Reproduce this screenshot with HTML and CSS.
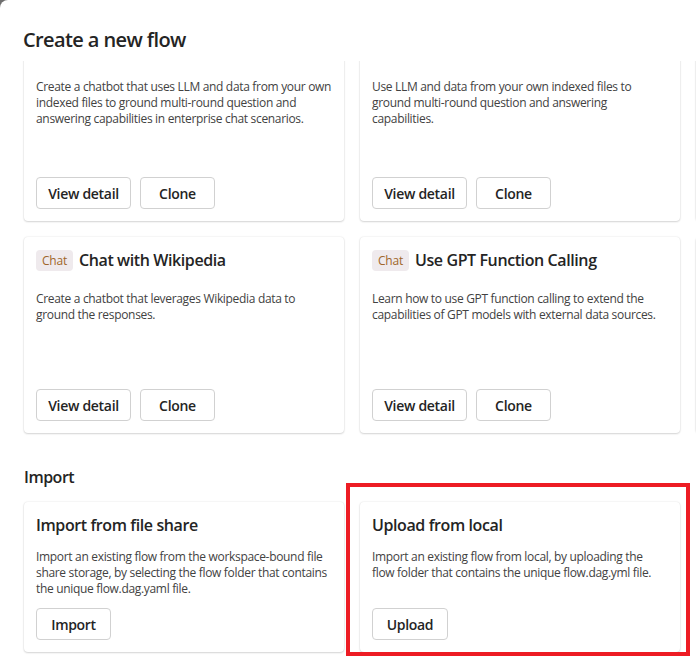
FILE: index.html
```html
<!DOCTYPE html>
<html lang="en">
<head>
<meta charset="utf-8">
<title>Create a new flow</title>
<link rel="stylesheet" href="styles.css">
</head>
<body>
<div class="dialog">
  <h1 class="title">Create a new flow</h1>
  <div class="scroll">
    <div class="content">
      <div class="grid">
        <div class="card tpl">
          <div class="card-head"></div>
          <p class="desc">Create a chatbot that uses LLM and data from your own<br>indexed files to ground multi-round question and<br>answering capabilities in enterprise chat scenarios.</p>
          <div class="actions"><button class="btn wide">View detail</button><button class="btn">Clone</button></div>
        </div>
        <div class="card tpl">
          <div class="card-head"></div>
          <p class="desc">Use LLM and data from your own indexed files to<br>ground multi-round question and answering<br>capabilities.</p>
          <div class="actions"><button class="btn wide">View detail</button><button class="btn">Clone</button></div>
        </div>
        <div class="card tpl">
          <div class="card-head"></div>
          <p class="desc"></p>
          <div class="actions"></div>
        </div>
        <div class="card tpl">
          <div class="card-head"><span class="tag">Chat</span><span class="card-title">Chat with Wikipedia</span></div>
          <p class="desc">Create a chatbot that leverages Wikipedia data to<br>ground the responses.</p>
          <div class="actions"><button class="btn wide">View detail</button><button class="btn">Clone</button></div>
        </div>
        <div class="card tpl">
          <div class="card-head"><span class="tag">Chat</span><span class="card-title">Use GPT Function Calling</span></div>
          <p class="desc">Learn how to use GPT function calling to extend the<br>capabilities of GPT models with external data sources.</p>
          <div class="actions"><button class="btn wide">View detail</button><button class="btn">Clone</button></div>
        </div>
        <div class="card tpl">
          <div class="card-head"></div>
          <p class="desc"></p>
          <div class="actions"></div>
        </div>
      </div>

      <h2 class="section">Import</h2>
      <div class="grid two">
        <div class="card imp">
          <div class="card-title">Import from file share</div>
          <p class="desc">Import an existing flow from the workspace-bound file<br>share storage, by selecting the flow folder that contains<br>the unique flow.dag.yaml file.</p>
          <div class="actions"><button class="btn">Import</button></div>
        </div>
        <div class="card imp">
          <div class="card-title">Upload from local</div>
          <p class="desc">Import an existing flow from local, by uploading the<br>flow folder that contains the unique flow.dag.yml file.</p>
          <div class="actions"><button class="btn up">Upload</button></div>
        </div>
      </div>
    </div>
  </div>
  <div class="highlight"></div>
</div>
</body>
</html>
```

FILE: styles.css
```css
* { box-sizing: border-box; }
html, body {
  margin: 0;
  padding: 0;
  width: 696px;
  height: 656px;
  overflow: hidden;
  background: #6f6f6f;
}
body {
  font-family: "Open Sans", "Noto Sans", sans-serif;
  color: #242424;
}
.dialog {
  position: relative;
  width: 760px;
  height: 700px;
  background: #ffffff;
  border-top-left-radius: 8px;
  overflow: hidden;
}
.title {
  margin: 0;
  height: 61px;
  padding: 26px 0 0 23px;
  font-size: 20px;
  line-height: 28px;
  font-weight: 600;
  letter-spacing: -0.6px;
  color: #242424;
}
.scroll {
  height: 640px;
  overflow: hidden;
}
.content {
  margin-top: -36px;
  padding: 0 0 0 24px;
}
.grid {
  display: grid;
  grid-template-columns: repeat(3, 320px);
  gap: 16px;
}
.grid.two {
  grid-template-columns: repeat(2, 320px);
}
.card {
  background: #ffffff;
  border-radius: 4px;
  box-shadow: 0 0 2px rgba(0, 0, 0, 0.12), 0 1px 2px rgba(0, 0, 0, 0.14);
  padding: 12px;
  display: flex;
  flex-direction: column;
}
.card.tpl {
  height: 196px;
}
.card-head {
  display: flex;
  align-items: center;
  gap: 6px;
  height: 22px;
}
.tag {
  display: inline-flex;
  align-items: center;
  justify-content: center;
  height: 21px;
  width: 37px;
  border-radius: 4px;
  background: #efeaed;
  color: #a0662a;
  font-size: 12px;
  letter-spacing: -0.2px;
}
.card-title {
  font-size: 16px;
  line-height: 22px;
  font-weight: 600;
  letter-spacing: -0.4px;
  color: #242424;
  white-space: nowrap;
}
.desc {
  margin: 20px 0 0 0;
  font-size: 12px;
  line-height: 16px;
  letter-spacing: -0.32px;
  color: #424242;
  white-space: nowrap;
}
.imp .desc {
  margin-top: 13px;
}
.actions {
  margin-top: auto;
  display: flex;
  gap: 9px;
  padding-top: 11px;
}
.btn {
  height: 32px;
  width: 75px;
  padding: 0;
  border: 1px solid #d1d1d1;
  border-radius: 4px;
  background: #ffffff;
  font-family: inherit;
  font-size: 14px;
  font-weight: 600;
  letter-spacing: -0.3px;
  color: #242424;
}
.btn.wide {
  width: 95px;
}
.btn.up {
  width: 76px;
}
.section {
  margin: 33px 0 14px 0;
  font-size: 16px;
  line-height: 22px;
  font-weight: 600;
  letter-spacing: -0.5px;
  color: #242424;
}
.highlight {
  position: absolute;
  left: 346px;
  top: 483px;
  width: 344px;
  height: 173px;
  border: 4px solid #ed1c24;
}
```
